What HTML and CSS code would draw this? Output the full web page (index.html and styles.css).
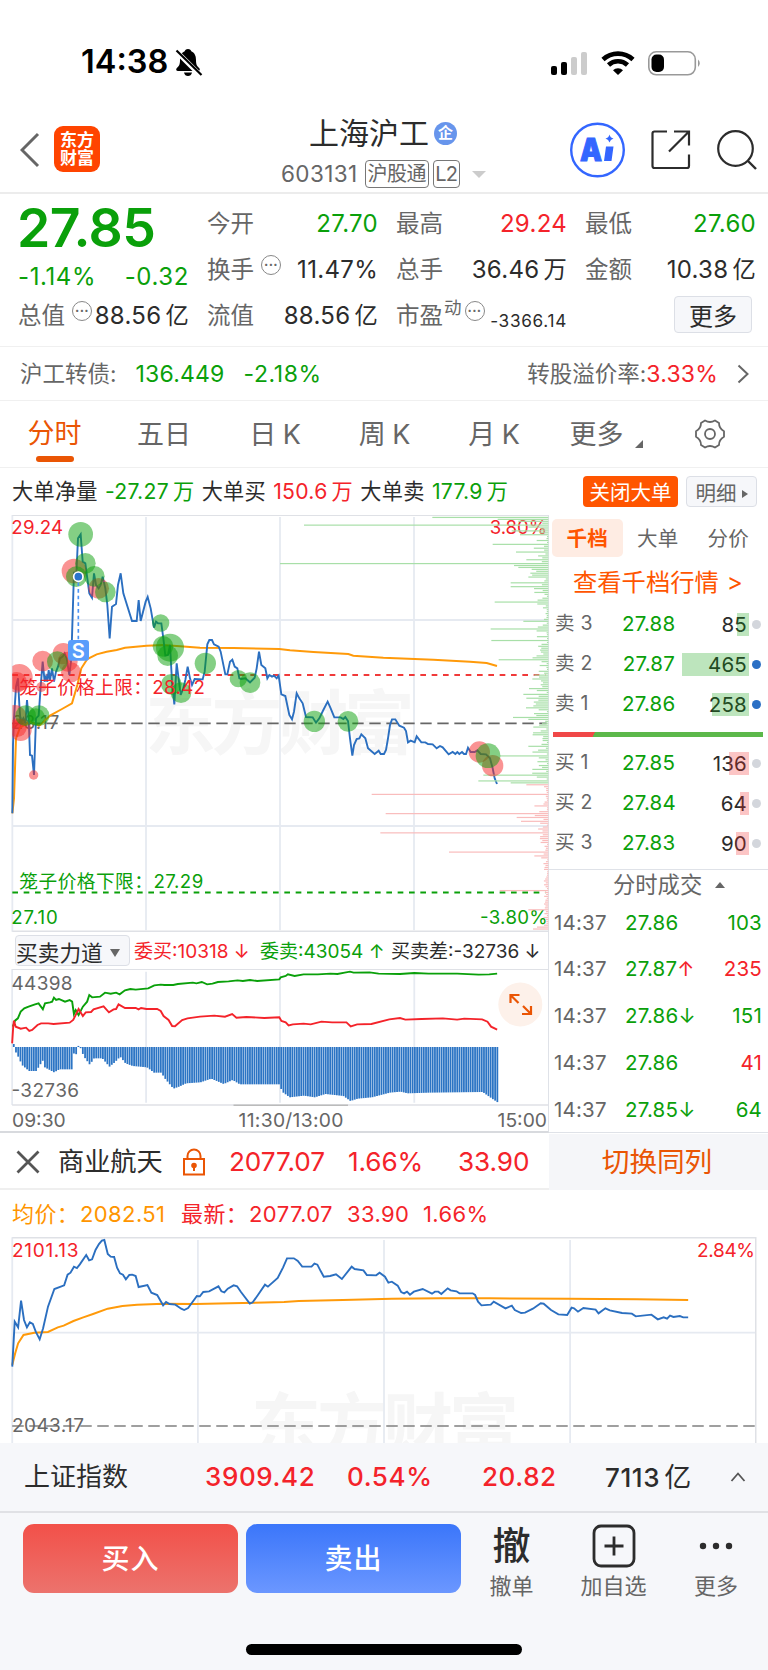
FILE: index.html
```
<!DOCTYPE html>
<html lang="zh-CN">
<head>
    <meta charset="UTF-8">
    <meta name="viewport" content="width=device-width, initial-scale=1.0">
    <title>上海沪工 603131</title>
    <link rel="stylesheet" href="styles.css">
</head>
<body>
    <!-- Status bar -->
    <div class="status-bar">
        <span class="clock">14:38</span>
        <svg class="bell" width="28" height="30" viewBox="0 0 28 30">
            <path d="M13 1c-2 0-3 1-3.300 2.300C6 5 5 8.500 5 12c0 5-1 6-3.500 8.500-.8 1 0 2.500 1.500 2.500h20c1.500 0 2.300-1.500 1.500-2.500C22 18 21 17 21 12c0-3.500-1-7-4.700-8.700C16 2 15 1 13 1zM9 24.500h8c-.5 2.500-2 3.500-4 3.500s-3.500-1-4-3.500z"/>
            <path d="M1 3l25 25" stroke="#fff" stroke-width="5"/>
            <path d="M1.500 2.500l25 24.500" stroke="#000" stroke-width="2.200"/>
        </svg>
        <svg class="signals" width="152" height="28" viewBox="0 0 152 28">
            <rect x="1" y="17" width="6" height="9" rx="2"/>
            <rect x="11" y="13" width="6" height="13" rx="2"/>
            <rect x="21" y="8" width="6" height="18" rx="2" fill="#ccc"/>
            <rect x="31" y="3" width="6" height="23" rx="2" fill="#ccc"/>
            <path d="M53 10.500a22 22 0 0 1 30 0M58.500 16a14 14 0 0 1 19 0" fill="none" stroke="#000" stroke-width="4.600"/>
            <path d="M63 21.300a7 7 0 0 1 10 0L68 26z"/>
            <rect x="98.800" y="2.800" width="46.500" height="23" rx="7.500" fill="none" stroke="#999" stroke-width="1.600"/>
            <rect x="101.500" y="5.500" width="12.500" height="17.500" rx="5"/>
            <path d="M148 10.500q3.600 3.700 0 7.500z" fill="#999"/>
        </svg>
    </div>

    <!-- Header -->
    <div class="header">
        <svg class="back" width="20" height="36" viewBox="0 0 20 36"><path d="M18 2L2 18l16 16" fill="none" stroke="#666" stroke-width="3"/></svg>
        <div class="logo">东方<br>财富</div>
        <div class="title">
            <div class="stock-name">上海沪工<span class="badge">企</span></div>
            <div class="stock-code">603131<span class="tag tag-wide">沪股通</span><span class="tag">L2</span><i class="arrow-down"></i></div>
        </div>
        <svg class="head-icons" width="192" height="60" viewBox="0 0 192 60">
            <circle cx="27.500" cy="30" r="26.300" fill="none" stroke="#3366ff" stroke-width="2.400"/>
            <text x="10" y="40.500" font-size="31" font-weight="900" fill="#3366ff" stroke="#3366ff" stroke-width="1" textLength="22" lengthAdjust="spacingAndGlyphs">A</text>
            <path d="M36 26.500h7.500l-2 14.500h-7.500zM39.500 14.500q.8 3.300 4 4-3.200.8-4 4-.8-3.200-4-4 3.200-.7 4-4z" fill="#3366ff"/>
            <path d="M97 11.500H84.500q-2 0-2 2V46q0 2 2 2H117q2 0 2-2V34.500M104 11.500h15v14M119 11.500L99 31.500" fill="none" stroke="#2c2c2c" stroke-width="2.200"/>
            <circle cx="165.500" cy="28.500" r="17.300" fill="none" stroke="#2c2c2c" stroke-width="2.200"/>
            <path d="M177.500 40.500l8.500 8.500" stroke="#2c2c2c" stroke-width="2.400"/>
        </svg>
    </div>

    <!-- Quote -->
    <div class="quote">
        <div class="quote-main">
            <div class="price">27.85</div>
            <div class="cell green change"><span>-1.14%</span><span>-0.32</span></div>
            <div class="cell"><label>总值<i class="more-dot">···</i></label><span>88.56<b>亿</b></span></div>
        </div>
        <div class="quote-grid">
            <div class="cell"><label>今开</label><span class="green">27.70</span></div>
            <div class="cell"><label>最高</label><span class="red">29.24</span></div>
            <div class="cell"><label>最低</label><span class="green">27.60</span></div>
            <div class="cell"><label>换手<i class="more-dot">···</i></label><span>11.47%</span></div>
            <div class="cell"><label>总手</label><span>36.46<b>万</b></span></div>
            <div class="cell"><label>金额</label><span>10.38<b>亿</b></span></div>
            <div class="cell"><label>流值</label><span>88.56<b>亿</b></span></div>
            <div class="cell"><label>市盈<sup>动</sup><i class="more-dot tight">···</i></label><span class="small">-3366.14</span></div>
            <div class="cell"><button class="more-btn">更多</button></div>
        </div>
    </div>

    <!-- Convertible bond -->
    <div class="bond">
        <label>沪工转债:</label><span class="green bond-price">136.449</span><span class="green">-2.18%</span>
        <label class="premium">转股溢价率:</label><span class="red">3.33%</span>
        <svg width="12" height="20" viewBox="0 0 12 20"><path d="M1.500 1.500L10.500 10l-9 8.500" fill="none" stroke="#666" stroke-width="2"/></svg>
    </div>

    <!-- Period tabs -->
    <div class="tabs">
        <span class="active">分时</span><span>五日</span><span>日 K</span><span>周 K</span><span>月 K</span><span>更多<i class="corner"></i></span>
        <svg width="32" height="32" viewBox="0 0 32 32" fill="none" stroke="#666" stroke-width="1.800">
            <circle cx="16" cy="16" r="5"/>
            <path d="M11 2.500q5 3 10 0l4 2.500q0 5.500 5 8.300v5.400q-5 2.800-5 8.300l-4 2.500q-5-3-10 0l-4-2.500q0-5.500-5-8.300v-5.400q5-2.800 5-8.300z" stroke-linejoin="round"/>
        </svg>
    </div>

    <!-- Big order summary -->
    <div class="orders">
        <span>大单净量</span><span class="green">-27.27<b>万</b></span>
        <span>大单买</span><span class="red">150.6<b>万</b></span>
        <span>大单卖</span><span class="green">177.9<b>万</b></span>
        <button class="close-btn">关闭大单</button>
        <button class="detail-btn">明细<i></i></button>
    </div>

    <div class="main">
        <div class="charts">
            <svg class="price-chart" width="549" height="417" viewBox="0 30 1647 1251">
                <clipPath id="plot"><rect x="37" y="30" width="1610" height="1250"/></clipPath>
                <text class="watermark" x="436" y="732" font-size="212" textLength="808">东方财富</text>
                <path class="grid" d="M438 36V1276M840 36V1276M1242 36V1276M37 345H1644M37 963H1644M37 30V1280"/>
                <path class="edge" d="M37 31H1647M37 1279H1647"/>
                <path d="M37 655H1640" stroke="#666" stroke-width="5" stroke-dasharray="34 17"/>
                <path d="M37 510H1636" stroke="#f03a3a" stroke-width="5.500" stroke-dasharray="17 17"/>
                <path d="M37 1162.500H1636" stroke="#0aa00a" stroke-width="5.500" stroke-dasharray="17 17"/>
                <text class="t-red" x="34" y="87" textLength="155">29.24</text>
                <text class="t-red" x="1469" y="87" textLength="172">3.80%</text>
                <text class="t-gray" x="35" y="672" textLength="143">28.17</text>
                <text class="t-green" x="34" y="1258" textLength="139">27.10</text>
                <text class="t-green" x="1440" y="1258" textLength="203">-3.80%</text>
                <text class="t-green" x="58" y="1150" textLength="552">笼子价格下限：27.29</text>
                <polyline class="avg-line" points="37,925 42,880 48,700 60,668 90,650 118,662 150,632 186,612 216,595 232,540 244,490 262,462 290,448 320,440 350,435 375,428 440,422 490,420 540,424 600,428 700,429 838,432 870,436 940,441 1045,447 1060,452 1150,458 1300,464 1410,470 1460,474 1491,483"/>
                <polyline class="blue-line" points="37,925 39,720 42,640 48,545 54,520 58,600 62,655 70,640 76,655 81,585 86,640 90,750 96,752 102,810 108,640 116,632 122,545 128,470 134,530 138,515 142,530 146,495 150,525 156,490 162,530 168,500 174,485 180,460 188,455 194,445 200,460 208,510 214,460 222,200 228,230 234,100 242,88 248,170 256,175 262,220 268,265 276,278 282,205 288,240 296,250 302,240 308,215 316,250 322,300 329,400 336,305 348,297 354,240 362,205 370,265 396,348 410,348 416,285 422,348 437,290 443,276 452,310 462,368 468,350 474,355 484,355 490,400 496,452 504,450 510,420 516,530 523,598 530,475 537,530 542,570 550,550 556,525 563,485 570,520 576,540 584,522 608,523 614,500 622,418 628,405 636,405 642,418 656,425 662,440 676,508 682,508 690,470 697,464 704,485 712,490 718,520 724,522 736,520 750,532 764,518 770,490 777,440 784,480 796,490 802,520 808,510 816,515 822,512 830,520 836,512 844,568 856,573 868,630 876,643 882,620 890,565 898,580 908,595 918,636 938,637 948,653 958,640 970,615 983,590 992,610 1003,637 1022,637 1030,642 1036,636 1044,648 1050,700 1057,752 1062,720 1070,702 1078,700 1084,688 1096,700 1104,730 1124,747 1136,737 1142,747 1152,747 1158,735 1164,700 1170,660 1176,643 1186,643 1198,662 1212,668 1218,678 1224,712 1232,707 1244,712 1250,694 1264,712 1276,712 1284,717 1298,718 1310,730 1320,723 1328,727 1346,748 1358,741 1366,747 1372,741 1378,747 1386,741 1392,747 1398,747 1404,728 1412,741 1424,741 1432,736 1442,747 1458,748 1470,760 1478,790 1484,820 1491,837"/>
                <g class="depth" id="depth"></g>
                <g class="sell-dots" clip-path="url(#plot)">
                    <circle cx="222" cy="198" r="37"/><circle cx="296" cy="250" r="31"/><circle cx="58" cy="517" r="40"/>
                    <circle cx="50" cy="532" r="31"/><circle cx="128" cy="468" r="31"/><circle cx="190" cy="446" r="32"/>
                    <circle cx="203" cy="470" r="30"/><circle cx="213" cy="502" r="30"/><circle cx="124" cy="546" r="15"/>
                    <circle cx="44" cy="635" r="35"/><circle cx="62" cy="675" r="33"/><circle cx="52" cy="668" r="28"/>
                    <circle cx="101" cy="810" r="14"/><circle cx="1438" cy="741" r="32"/><circle cx="1478" cy="782" r="32"/>
                </g>
                <g class="buy-dots">
                    <circle cx="242" cy="88" r="37"/><circle cx="256" cy="175" r="31"/><circle cx="229" cy="215" r="31"/>
                    <circle cx="283" cy="214" r="31"/><circle cx="316" cy="261" r="31"/><circle cx="482" cy="354" r="26"/>
                    <circle cx="489" cy="424" r="31"/><circle cx="510" cy="428" r="42"/><circle cx="503" cy="452" r="31"/>
                    <circle cx="514" cy="538" r="31"/><circle cx="543" cy="563" r="31"/><circle cx="616" cy="475" r="32"/>
                    <circle cx="715" cy="521" r="26"/><circle cx="750" cy="533" r="31"/><circle cx="172" cy="470" r="31"/>
                    <circle cx="77" cy="632" r="31"/><circle cx="117" cy="632" r="31"/><circle cx="108" cy="636" r="26"/>
                    <circle cx="943" cy="649" r="32"/><circle cx="1044" cy="649" r="31"/><circle cx="1464" cy="752" r="37"/>
                </g>
                <text class="t-red" x="58" y="567" textLength="557">笼子价格上限：28.42</text>
                <path d="M235 232V405" stroke="#4a93f5" stroke-width="5" stroke-dasharray="11 9"/>
                <circle cx="235" cy="215" r="14" fill="#2b74cc" stroke="#fff" stroke-width="5"/>
                <rect x="204" y="405" width="63" height="62" rx="9" fill="#5a9dfb"/>
                <text x="235" y="458" font-size="60" font-weight="600" fill="#fff" text-anchor="middle">S</text>
            </svg>

            <div class="power-bar">
                <button>买卖力道<i></i></button>
                <span class="red">委买:10318 ↓</span>
                <span class="green">委卖:43054 ↑</span>
                <span>买卖差:-32736 ↓</span>
            </div>

            <svg class="power-chart" width="549" height="137" viewBox="0 969 549 137">
                <g transform="translate(0 810) scale(.35714 .33333)">
                    <path class="grid" d="M409 485V878M784 485V878M1160 485V878M34 477V885"/>
                    <path class="edge" d="M34 478H1540M34 885H1540"/>
                    <g class="power-bars" id="powerBars"></g>
                    <polyline class="up-line" points="36,650 42,632 50,625 58,605 68,595 80,590 98,583 108,580 120,598 126,580 140,577 146,575 151,563 157,570 165,567 182,575 195,570 202,575 207,612 212,600 220,615 232,590 244,575 250,555 258,562 280,560 294,548 310,551 325,548 335,553 350,541 365,537 380,539 415,535 432,526 450,524 460,525 485,525 498,522 540,518 550,520 565,516 580,523 595,521 610,516 640,514 665,511 680,513 700,510 720,513 782,508 786,502 800,498 806,493 825,498 850,493 890,493 925,491 945,492 965,488 980,485 990,488 1035,487 1060,491 1120,492 1160,489 1200,491 1280,491 1340,494 1370,493 1392,491"/>
                    <polyline class="down-line" points="34,700 37,650 39,632 44,650 58,656 73,653 82,663 90,660 105,645 115,640 135,640 150,642 195,638 205,630 220,597 232,618 240,607 255,606 262,598 290,589 305,607 318,598 325,597 332,583 350,594 380,594 388,598 395,594 410,597 440,597 450,603 458,618 472,630 482,648 490,649 510,630 525,625 560,620 600,617 630,620 650,612 662,623 690,621 740,624 782,622 788,633 800,637 808,646 820,643 850,641 870,643 900,635 930,637 970,637 982,649 1000,643 1040,642 1090,628 1120,624 1135,629 1180,627 1240,625 1280,629 1300,626 1350,628 1365,635 1375,650 1392,659"/>
                </g>
                <text class="axis" x="11.500" y="990" textLength="61">44398</text>
                <text class="axis" x="11.500" y="1097" textLength="67.500">-32736</text>
                <circle cx="520.300" cy="1004.500" r="22" fill="#fdf1ea"/>
                <path d="M510.500 1003v-8h9M510.500 995l8 8M531 1006v8h-9M531 1014l-8-8" fill="none" stroke="#ea5504" stroke-width="2.200"/>
                <path d="M233.500 1105.300H348" stroke="#bbb" stroke-width="1.500"/>
            </svg>
            <div class="time-axis"><span>09:30</span><span>11:30/13:00</span><span>15:00</span></div>
        </div>

        <!-- Order book -->
        <div class="book">
            <div class="book-tabs"><span class="on">千档</span><span>大单</span><span>分价</span></div>
            <div class="book-link">查看千档行情 <em>&gt;</em></div>
            <div class="level sell"><label>卖 3</label><span>27.88</span><em>85<i style="width:12.500px"></i></em><u></u></div>
            <div class="level sell"><label>卖 2</label><span>27.87</span><em>465<i style="width:67px"></i></em><u class="blue"></u></div>
            <div class="level sell"><label>卖 1</label><span>27.86</span><em>258<i style="width:37px"></i></em><u class="blue"></u></div>
            <div class="ratio"></div>
            <div class="level buy"><label>买 1</label><span>27.85</span><em>136<i style="width:20px"></i></em><u></u></div>
            <div class="level buy"><label>买 2</label><span>27.84</span><em>64<i style="width:9.500px"></i></em><u></u></div>
            <div class="level buy"><label>买 3</label><span>27.83</span><em>90<i style="width:13px"></i></em><u></u></div>
            <div class="deals-head">分时成交<i></i></div>
            <div class="deal"><span>14:37</span><span class="green">27.86</span><em class="green">103</em></div>
            <div class="deal"><span>14:37</span><span class="green">27.87<b class="red">↑</b></span><em class="red">235</em></div>
            <div class="deal"><span>14:37</span><span class="green">27.86<b>↓</b></span><em class="green">151</em></div>
            <div class="deal"><span>14:37</span><span class="green">27.86</span><em class="red">41</em></div>
            <div class="deal"><span>14:37</span><span class="green">27.85<b>↓</b></span><em class="green">64</em></div>
        </div>
    </div>

    <!-- Sector -->
    <div class="sector">
        <svg width="24" height="24" viewBox="0 0 24 24"><path d="M1.500 1.500l21 21M22.500 1.500l-21 21" stroke="#555" stroke-width="2.800"/></svg>
        <span class="sector-name">商业航天</span>
        <svg width="24" height="28" viewBox="0 0 24 28" fill="none" stroke="#ea5504" stroke-width="2"><rect x="2" y="11" width="20" height="15.500"/><path d="M5.500 11V8a6.500 6.500 0 0 1 13 0v3M12 19v4"/><circle cx="12" cy="17.500" r="1.800" fill="#ea5504"/></svg>
        <span class="red">2077.07</span><span class="red">1.66%</span><span class="red">33.90</span>
        <a class="switch">切换同列</a>
    </div>
    <div class="sector-info">
        <span class="orange">均价：</span><span class="orange">2082.51</span><span class="red">最新：</span><span class="red">2077.07</span><span class="red">33.90</span><span class="red">1.66%</span>
    </div>
    <svg class="sector-chart" width="768" height="206" viewBox="0 1237 768 206">
        <text class="watermark" x="251" y="1452" font-size="70" textLength="268">东方财富</text>
        <g transform="translate(0 1130) scale(.4898 .33333)">
            <path class="grid" d="M404 330V940M784 330V940M1164 330V940M25 322V940M25 608H1543"/>
            <path class="edge" d="M25 323H1543V940"/>
            <path d="M25 888H1543" class="base-line"/>
            <polyline class="avg-line" points="25,705 31,670 37,640 48,615 70,608 98,606 118,592 130,587 150,573 170,562 190,552 220,536 250,528 280,524 333,521 400,522 470,520 580,516 610,513 700,510 800,506 900,505 1000,505 1160,506 1300,508 1405,510"/>
            <polyline class="blue-line" points="25,710 30,575 37,592 43,512 49,570 55,592 61,577 67,582 73,605 81,628 88,595 98,530 111,477 131,466 138,434 144,428 151,410 157,414 163,403 176,375 182,391 188,388 195,360 202,342 208,332 213,330 220,372 226,380 233,381 239,413 245,430 251,434 257,448 264,435 270,434 277,438 283,471 301,465 309,488 321,495 333,526 339,516 346,522 358,524 370,536 376,540 384,534 402,498 408,499 415,486 427,484 446,469 452,484 458,487 465,476 477,466 484,469 492,486 510,521 516,517 528,492 541,464 547,470 567,444 578,412 586,385 600,385 608,393 617,410 636,410 642,401 648,404 655,424 661,440 674,438 686,433 698,447 718,410 724,417 742,421 749,435 768,436 775,428 786,440 793,458 800,455 812,467 819,486 825,490 831,485 837,494 845,485 863,477 882,491 888,485 895,485 901,492 914,475 920,481 932,484 938,490 965,490 970,495 976,515 983,526 1002,524 1008,515 1032,535 1045,527 1051,540 1064,549 1072,548 1088,536 1104,520 1110,521 1125,540 1140,553 1158,555 1167,533 1172,535 1180,545 1191,534 1216,539 1222,550 1236,535 1245,541 1270,549 1290,551 1298,559 1330,554 1343,568 1355,562 1362,566 1368,557 1375,561 1388,558 1395,562 1405,562"/>
        </g>
        <text class="axis t-red" x="12" y="1256.700" textLength="66.500">2101.13</text>
        <text class="axis t-red" x="697" y="1256.700" textLength="58">2.84%</text>
        <text class="axis" x="12" y="1431.500" textLength="72">2043.17</text>
    </svg>

    <!-- Index -->
    <div class="index-row">
        <span>上证指数</span><b class="red">3909.42</b><b class="red">0.54%</b><b class="red">20.82</b><b>7113<i>亿</i></b>
        <svg width="16" height="12" viewBox="0 0 16 12"><path d="M1.500 10L8 2.500l6.500 7.500" fill="none" stroke="#555" stroke-width="1.800"/></svg>
    </div>

    <!-- Actions -->
    <div class="actions">
        <button class="buy-btn">买入</button>
        <button class="sell-btn">卖出</button>
        <div class="action"><strong>撤</strong><span>撤单</span></div>
        <div class="action"><svg width="44" height="44" viewBox="0 0 44 44" fill="none" stroke="#2c2c2c" stroke-width="2.800"><rect x="2" y="2" width="40" height="40" rx="7"/><path d="M22 12.500v19M12.500 22h19"/></svg><span>加自选</span></div>
        <div class="action"><svg width="44" height="44" viewBox="0 0 44 44" fill="#2c2c2c"><circle cx="9" cy="22" r="3.200"/><circle cx="22" cy="22" r="3.200"/><circle cx="35" cy="22" r="3.200"/></svg><span>更多</span></div>
        <div class="home-bar"></div>
    </div>

    <script>
        const SVG = 'http://www.w3.org/2000/svg';

        function addRect(parent, x, y, w, h, cls) {
            const rect = document.createElementNS(SVG, 'rect');
            rect.setAttribute('x', x);
            rect.setAttribute('y', y);
            rect.setAttribute('width', w);
            rect.setAttribute('height', h);
            if (cls) rect.setAttribute('class', cls);
            parent.appendChild(rect);
        }

        // Depth profile: row number -> length of the large orders
        const large = {
            0: 348, 1: 152, 2: 90, 4: 733, 5: 60, 7: 110, 9: 85, 14: 167, 18: 97, 22: 66, 24: 805, 25: 103, 26: 90, 29: 54, 31: 60, 34: 113,
            36: 113, 39: 42, 44: 161, 54: 75, 58: 173, 64: 171, 74: 149, 84: 48, 89: 58, 92: 75, 94: 66, 99: 67, 104: 106, 105: 60,
            119: 60, 124: 145, 131: 48, 134: 195, 137: 210, 138: 113, 139: 66, 144: 530, 154: 488, 156: 95, 158: 82,
            164: 504, 174: 298, 176: 42, 194: 146, 204: 60, 213: 34, 214: 46
        };
        const depth = document.getElementById('depth');
        for (let i = 0; i < 215; i++) {
            const noise = Math.abs(Math.sin(i * 12.9898) * 43758.5453) % 1;
            const base = i > 160 ? 3 + noise * (i < 178 ? 30 : 12) : 4 + noise * noise * 46;
            const len = large[i] || base;
            addRect(depth, 1645 - len, 35.5 + i * 5.77, len, 3.6, i < 139 ? 'g' : 'r');
        }

        // Buy/sell difference, interpolated between the sample points
        const diff = [[37, 702], [42, 725], [52, 745], [60, 765], [80, 783], [100, 783], [118, 752], [124, 772], [150, 787], [165, 778], [200, 778], [206, 726], [213, 734], [220, 697], [226, 722], [235, 742], [250, 764], [262, 745], [285, 745], [305, 770], [320, 757], [335, 740], [350, 760], [370, 768], [410, 772], [430, 788], [450, 788], [460, 805], [484, 836], [500, 830], [520, 820], [560, 817], [590, 806], [625, 822], [650, 810], [670, 823], [782, 823], [788, 845], [810, 862], [850, 857], [880, 862], [910, 852], [960, 858], [980, 873], [1000, 866], [1040, 862], [1090, 848], [1120, 845], [1140, 850], [1200, 848], [1350, 846], [1375, 865], [1395, 879]];
        const powerBars = document.getElementById('powerBars');
        for (let i = 0, k = 0; i < 218; i++) {
            const x = 37 + i * 6.24;
            while (k < diff.length - 2 && diff[k + 1][0] < x) k++;
            const [x0, y0] = diff[k];
            const [x1, y1] = diff[k + 1];
            const y = y0 + (y1 - y0) * (x - x0) / (x1 - x0);
            addRect(powerBars, x - 1, Math.min(y, 711), 5, Math.abs(y - 711));
        }
    </script>
</body>
</html>
```
FILE: styles.css
```
* {
    box-sizing: border-box;
}
body {
    margin: 0;
    width: 768px;
    background: #fff;
    color: #2c2c2c;
    font-family: Inter, "Noto Sans CJK SC", sans-serif;
    font-size: 24px;
    line-height: 1;
    white-space: nowrap;
}
i, em {
    font-style: normal;
}
b {
    font-weight: inherit;
}
button {
    font-family: inherit;
    padding: 0;
    white-space: nowrap;
}
svg {
    display: block;
    flex: none;
}
text {
    font-family: Inter, "Noto Sans CJK SC", sans-serif;
}
.green {
    color: #0aa00a;
}
.red {
    color: #f4232a;
}
.orange {
    color: #ff9500;
}

/* Status bar */
.status-bar {
    height: 100px;
    padding: 25px 66px 0 81px;
    display: flex;
    align-items: center;
}
.clock {
    width: 87px;
    font-size: 32.5px;
    font-weight: 600;
    letter-spacing: 0;
    color: #000;
}
.bell {
    margin-left: 7px;
}
.signals {
    margin-left: auto;
}

/* Header */
.header {
    height: 94px;
    border-bottom: 2px solid #ececec;
    display: flex;
    padding-left: 20px;
}
.back {
    margin-top: 32px;
}
.logo {
    width: 46px;
    height: 46px;
    margin: 26px 0 0 14px;
    padding-top: 5px;
    border-radius: 9px;
    background: #ff4400;
    color: #fff;
    font-size: 17px;
    font-weight: 700;
    line-height: 18px;
    text-align: center;
}
.title {
    width: 286px;
    margin-left: 181px;
    padding-top: 15px;
}
.stock-name {
    height: 36px;
    padding-left: 28px;
    display: flex;
    align-items: center;
    font-size: 30px;
}
.badge {
    width: 23px;
    height: 23px;
    margin-left: 5px;
    border-radius: 50%;
    background: #6795ec;
    color: #fff;
    font-size: 15px;
    font-weight: 700;
    line-height: 22px;
    text-align: center;
}
.stock-code {
    height: 30px;
    margin-top: 8px;
    display: flex;
    align-items: center;
    font-size: 22.5px;
    letter-spacing: 0.4px;
    color: #666;
}
.tag {
    width: 27px;
    height: 28px;
    margin-left: 4px;
    border: 1px solid #777;
    border-radius: 4px;
    line-height: 26px;
    font-size: 20px;
    letter-spacing: -0.8px;
    text-align: center;
}
.tag-wide {
    width: 64px;
    margin-left: 7px;
    letter-spacing: -0.5px;
}
.arrow-down {
    margin-left: 12px;
    border: 7px solid transparent;
    border-top-color: #ccc;
    border-bottom: 0;
}
.head-icons {
    margin: 19.5px 0 0 3px;
}

/* Quote */
.quote {
    height: 153px;
    border-bottom: 1px solid #f0f0f0;
    padding: 7px 12px 0 18px;
    display: flex;
    gap: 19px;
}
.quote-main {
    width: 170px;
}
.price {
    height: 52px;
    line-height: 53px;
    margin-left: -1px;
    color: #0aa00a;
    font-size: 53.5px;
    font-weight: 600;
    letter-spacing: -0.5px;
}
.quote-grid {
    flex: 1;
    display: grid;
    grid-template-columns: repeat(3, 170px);
    grid-auto-rows: 46px;
    column-gap: 19px;
}
.cell {
    height: 46px;
    display: flex;
    justify-content: space-between;
    align-items: center;
}
.cell span {
    margin-right: -1px;
    letter-spacing: 0.3px;
}
.quote-main .cell.change {
    height: 40px;
    padding-top: 8px;
}
.cell.change span {
    letter-spacing: 0.6px;
}
.cell label {
    display: flex;
    align-items: center;
    font-size: 23.5px;
    color: #666;
}
.cell b {
    margin-left: 4px;
    font-size: 23.3px;
}
.cell sup {
    font-size: 17.5px;
    margin: -16px 0 0 1px;
    line-height: 1;
}
.more-dot {
    width: 20px;
    height: 20px;
    margin: -11px -4px 0 7px;
    border: 1.5px solid #888;
    border-radius: 50%;
    font-size: 13px;
    font-weight: 700;
    letter-spacing: 0.3px;
    line-height: 16px;
    text-align: center;
}
.more-dot.tight {
    margin-left: 3px;
}
.cell .small {
    font-size: 17.2px;
    letter-spacing: 0.7px;
    margin-top: 9px;
}
.more-btn {
    width: 78px;
    height: 37px;
    margin: -3px 3px 0 auto;
    padding-bottom: 6px;
    border: 1px solid #dcdfe6;
    border-radius: 4px;
    background: #f6f7fa;
    color: #2c2c2c;
    font-size: 24px;
}

/* Convertible bond */
.bond {
    height: 54px;
    border-bottom: 1px solid #f0f0f0;
    padding: 1px 20px 0 20px;
    display: flex;
    align-items: center;
    font-size: 23px;
    letter-spacing: 0.2px;
}
.bond label {
    color: #666;
    font-size: 22.5px;
    letter-spacing: 0;
}
.bond-price {
    margin: 0 19px 0 19px;
}
.bond-price + .green {
    letter-spacing: 0.6px;
}
.bond .premium {
    margin-left: auto;
}
.bond svg {
    margin: 0 -1px 0 19px;
}

/* Period tabs */
.tabs {
    height: 67px;
    border-bottom: 1px solid #f0f0f0;
    display: grid;
    grid-template-columns: 109px 110px 112px 107px 112px 112px 1fr;
    align-items: center;
    justify-items: center;
    font-size: 27px;
    word-spacing: -1px;
    color: #666;
}
.tabs .active {
    color: #ea5504;
    align-self: stretch;
    padding-top: 19px;
}
.tabs .active::after {
    content: "";
    display: block;
    width: 38px;
    height: 6px;
    margin: 9px auto 0;
    border-radius: 3px;
    background: #ea5504;
}
.tabs svg {
    margin-left: -11px;
}
.corner {
    display: inline-block;
    margin-left: 11px;
    border-left: 8px solid transparent;
    border-bottom: 8px solid #666;
    vertical-align: -4px;
}

/* Big orders */
.orders {
    height: 47px;
    padding: 0 11px 0 12px;
    display: flex;
    align-items: center;
    font-size: 21.2px;
}
.orders span {
    margin-right: 7.3px;
    letter-spacing: 0.25px;
}
.orders b {
    margin-left: 4px;
}
.orders button {
    height: 31px;
    border-radius: 4px;
    padding-bottom: 2px;
    font-size: 20.5px;
}
.close-btn {
    width: 95px;
    margin-left: auto;
    border: 0;
    background: #ff5500;
    color: #fff;
}
.detail-btn {
    width: 71px;
    margin-left: 8px;
    border: 1px solid #dcdfe6;
    background: #f6f7fa;
    color: #666;
}
.detail-btn i {
    display: inline-block;
    margin-left: 5px;
    border: 4px solid transparent;
    border-left: 6px solid #666;
    border-right: 0;
    vertical-align: 3px;
}

/* Main area */
.main {
    height: 618px;
    display: flex;
}
.charts {
    width: 549px;
    border-right: 1px solid #dfe2e8;
    border-bottom: 2px solid #d8dade;
}
.charts svg, .sector-chart {
    overflow: hidden;
}
.watermark {
    fill: #f6f6f6;
    font-weight: 700;
}
.grid, .edge, polyline {
    fill: none;
    vector-effect: non-scaling-stroke;
}
.grid {
    stroke: #e6eaf1;
    stroke-width: 1.8px;
}
.edge {
    stroke: #dfe1e6;
    stroke-width: 1.5px;
}
.blue-line {
    stroke: #2b6fc0;
    stroke-width: 1.9px;
}
.avg-line {
    stroke: #ff9a0a;
    stroke-width: 2px;
}
.up-line {
    stroke: #0aa00a;
    stroke-width: 1.9px;
}
.down-line {
    stroke: #f4232a;
    stroke-width: 1.9px;
}
.base-line {
    stroke: #808080;
    stroke-width: 1.5px;
    stroke-dasharray: 11.5 5.5;
    vector-effect: non-scaling-stroke;
}
.price-chart text:not(.watermark):not([text-anchor]) {
    font-size: 56px;
}
.axis {
    font-size: 19px;
    fill: #666;
}
.t-red, .axis.t-red {
    fill: #f4232a;
}
.t-green {
    fill: #0aa00a;
}
.t-gray {
    fill: #666;
}
.sell-dots circle {
    fill: #f52828;
    fill-opacity: 0.5;
}
.buy-dots circle {
    fill: #0aa00a;
    fill-opacity: 0.5;
}
.depth .g {
    fill: #a8dfa8;
}
.depth .r {
    fill: #f9bcbc;
}
.power-bars rect {
    fill: #2b74c4;
}
.power-bar {
    height: 37px;
    padding-left: 15px;
    display: grid;
    grid-template-columns: 119px 126px 131px 1fr;
    align-items: center;
    font-size: 19px;
}
.power-bar span {
    padding-top: 1px;
}
.power-bar button {
    width: 115px;
    height: 31px;
    padding: 0 0 4px 0;
    border: 1px solid #dcdfe6;
    border-radius: 4px;
    background: #f6f7fa;
    color: #2c2c2c;
    font-size: 21.7px;
    text-align: left;
}
.power-bar i {
    display: inline-block;
    margin-left: 7px;
    border: 5px solid transparent;
    border-top: 8px solid #666;
    border-bottom: 0;
    vertical-align: 4px;
}
.time-axis {
    height: 26px;
    padding: 4px 1px 0 12px;
    display: flex;
    justify-content: space-between;
    align-items: center;
    font-size: 19.3px;
    color: #666;
}
.time-axis span:nth-child(2) {
    padding-left: 19px;
    letter-spacing: 0.3px;
}

/* Order book */
.book {
    width: 219px;
    border-bottom: 1px solid #dfe2e8;
    font-size: 20.5px;
    letter-spacing: 0.2px;
}
.book-tabs {
    height: 43px;
    padding: 4px 0 0 3px;
    display: flex;
    color: #666;
    font-size: 20.5px;
}
.book-tabs span {
    width: 70.5px;
    height: 38px;
    border-radius: 5px;
    line-height: 39px;
    text-align: center;
}
.book-tabs .on {
    background: #feece3;
    color: #ff5500;
    font-weight: 700;
}
.book-link {
    height: 46px;
    padding: 2px 0 0 24px;
    display: flex;
    align-items: center;
    gap: 8px;
    font-size: 24.3px;
    letter-spacing: 0;
    color: #ff5500;
}
.level {
    height: 40px;
    padding-left: 6px;
    display: grid;
    grid-template-columns: 67px 53px 74px 9px;
    align-items: center;
}
.level label {
    color: #666;
    font-size: 19.5px;
}
.level span {
    color: #0aa00a;
    text-align: right;
}
.level em {
    position: relative;
    height: 23px;
    padding-right: 2px;
    line-height: 23px;
    text-align: right;
}
.level em i {
    position: absolute;
    top: 0;
    right: 0;
    height: 23px;
    background: rgba(10, 160, 10, 0.27);
}
.buy em i {
    background: rgba(245, 40, 40, 0.27);
}
.level u {
    width: 9px;
    height: 9px;
    margin-left: 3px;
    border-radius: 50%;
    background: #d3d6dc;
}
.level .blue {
    background: #2b6fc4;
}
.ratio {
    height: 5px;
    margin: 8px 5px 6px 4px;
    background: linear-gradient(120deg, #f04848 36.5px, #5cb84a 36.5px);
}
.deals-head {
    height: 38px;
    border-top: 1px solid #dfe2e8;
    margin-top: 6px;
    padding: 0 0 7px 64px;
    display: flex;
    align-items: center;
    font-size: 22.3px;
    letter-spacing: 0;
    color: #666;
}
.deals-head i {
    margin-left: 13px;
    border: 5px solid transparent;
    border-bottom: 6px solid #666;
    border-top: 0;
}
.deal {
    height: 46.8px;
    padding: 0 6px 15px 5px;
    display: grid;
    grid-template-columns: 71px 1fr auto;
    align-items: center;
    color: #666;
}

/* Sector */
.sector {
    height: 57px;
    padding: 1px 0 0 16px;
    display: grid;
    grid-template-columns: 42px 124px 47px 119px 110px 91px 219px;
    align-items: center;
    font-size: 26.2px;
    letter-spacing: -0.1px;
    background: linear-gradient(#efefef, #efefef) 0 100% / 549px 2px no-repeat;
}
.sector-name {
    letter-spacing: 0;
}
.switch {
    height: 56px;
    padding-right: 3px;
    background: #f5f6f9;
    color: #ea5504;
    font-size: 27.7px;
    line-height: 57px;
    text-align: center;
}
.sector-info {
    height: 47px;
    padding: 1px 0 0 12px;
    display: grid;
    grid-template-columns: 68px 101px 68px 98px 76px 1fr;
    align-items: center;
    font-size: 22px;
    letter-spacing: 0.4px;
}

/* Index */
.index-row {
    height: 70px;
    border-bottom: 2px solid #e0e1e5;
    padding-left: 24px;
    display: grid;
    grid-template-columns: 181px 142px 135px 123px 125px 1fr;
    align-items: center;
    background: #f6f7fa;
    font-size: 26px;
}
.index-row b {
    font-weight: 500;
    letter-spacing: 0.6px;
}
.index-row i {
    margin-left: 4px;
    font-size: 27px;
    font-weight: 400;
}

/* Actions */
.actions {
    height: 158px;
    padding: 11px 0 0 23px;
    display: grid;
    grid-template-columns: 215px 215px 85px 103px 86px;
    grid-template-rows: 104px 20px;
    column-gap: 8px;
    background: #f6f7fa;
}
.buy-btn, .sell-btn {
    height: 69px;
    border: 0;
    border-radius: 11px;
    padding-bottom: 3px;
    color: #fff;
    font-size: 28px;
    font-weight: 500;
    letter-spacing: 1px;
}
.buy-btn {
    background: linear-gradient(#f25049, #ec736d);
}
.sell-btn {
    background: linear-gradient(#3b76fa, #6b97ff);
}
.action {
    display: flex;
    flex-direction: column;
    align-items: center;
    font-size: 22px;
    color: #666;
}
.action strong {
    height: 44px;
    color: #2c2c2c;
    font-size: 38px;
    font-weight: 500;
    line-height: 42px;
}
.action span {
    margin-top: 7px;
}
.home-bar {
    grid-column: 1 / -1;
    width: 276px;
    height: 11px;
    margin: 16px 0 0 223px;
    border-radius: 6px;
    background: #000;
}
```
